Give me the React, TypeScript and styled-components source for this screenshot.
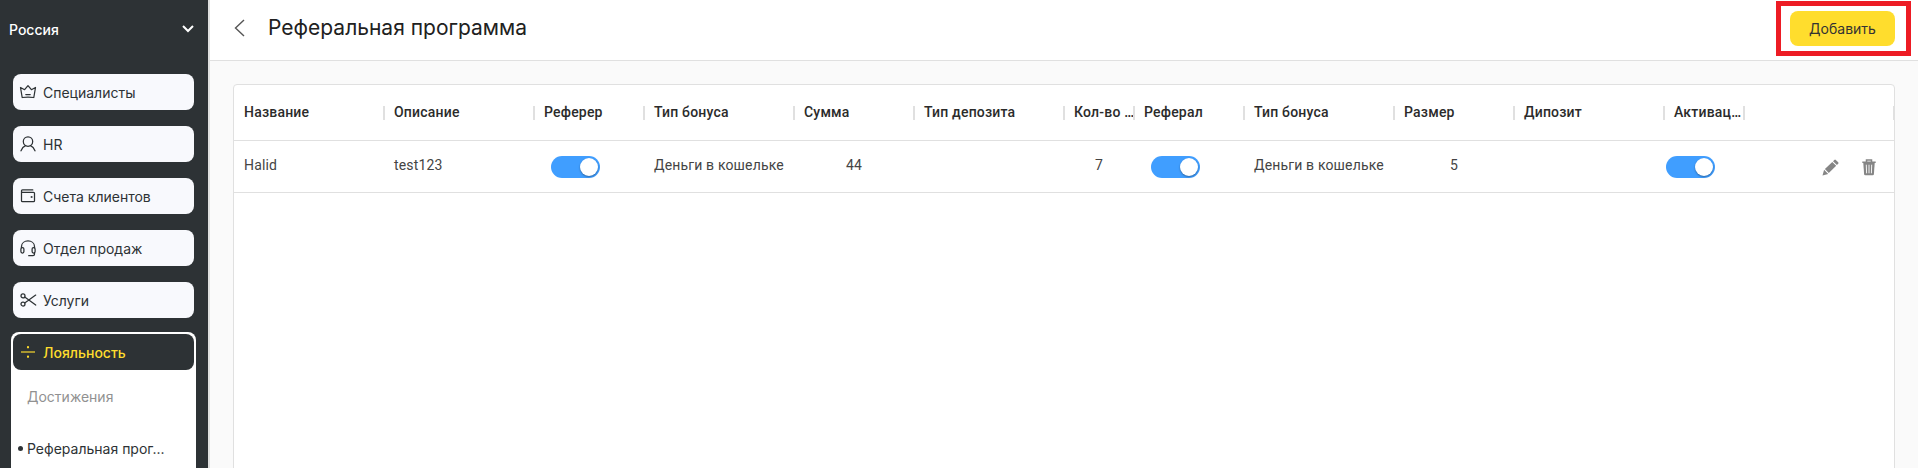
import React from "react";
import styled, { createGlobalStyle } from "styled-components";

const GlobalStyle = createGlobalStyle`
  * { box-sizing: border-box; }
  body { margin: 0; background: #fafafa; overflow: hidden; }
`;

const Page = styled.div`
  display: flex;
  height: 468px;
  overflow: hidden;
  font-family: Inter, "Liberation Sans", sans-serif;
`;

const Sidebar = styled.aside`
  width: 210px;
  flex: none;
  background: #2d3235;
  border-right: 2px solid #e0e0e0;
  padding: 0 12px 0 11px;
  overflow: hidden;
`;

const Region = styled.div`
  display: flex;
  align-items: center;
  justify-content: space-between;
  height: 58px;
  margin: 0 2px 16px -2px;
  font-size: 14px;
  font-weight: 500;
  color: #fff;
`;

const NavItem = styled.div<{ $active?: boolean }>`
  display: flex;
  align-items: center;
  gap: 6px;
  height: 36px;
  margin: 0 2px 16px;
  padding-left: 6px;
  border-radius: 8px;
  font-size: 14px;
  font-weight: ${(p) => (p.$active ? 500 : 400)};
  color: ${(p) => (p.$active ? "#ffdd2d" : "#2d3235")};
  background: ${(p) => (p.$active ? "#2d3235" : "#f8f9fd")};
`;

const NavIcon = styled.svg`
  width: 18px;
  height: 18px;
  flex: none;
  fill: none;
  stroke: currentColor;
  stroke-width: 1.25;
  stroke-linejoin: round;
  stroke-linecap: round;
`;

const NavGroup = styled.div`
  margin-top: -2px;
  padding-top: 2px;
  height: 200px;
  border-radius: 8px 8px 0 0;
  background: #fff;
`;

const SubItem = styled.div<{ $current?: boolean }>`
  display: flex;
  align-items: center;
  gap: 4px;
  height: 52px;
  margin-top: ${(p) => (p.$current ? "0" : "-16px")};
  padding-left: ${(p) => (p.$current ? "7px" : "16px")};
  font-size: 14px;
  color: ${(p) => (p.$current ? "#2d3235" : "#919191")};
`;

const Bullet = styled.span`
  width: 5px;
  height: 5px;
  border-radius: 50%;
  background: currentColor;
`;

const Main = styled.main`
  flex: 1;
  min-width: 0;
`;

const Header = styled.header`
  display: flex;
  align-items: center;
  height: 61px;
  padding: 0 7px 4px 24px;
  border-bottom: 1px solid #e0e0e0;
  background: #fff;
`;

const Title = styled.h1`
  flex: 1;
  margin: 0 0 0 22px;
  font-size: 21px;
  font-weight: 400;
  line-height: 28px;
  color: #212121;
`;

const Highlight = styled.div`
  display: flex;
  padding: 5px 11px 5px 9px;
  width: 135px;
  height: 55px;
  border: 5px solid #ed1c24;
`;

const AddButton = styled.button`
  flex: 1;
  height: 35px;
  padding: 0;
  border: 0;
  border-radius: 8px;
  background: #ffdd2d;
  font: 400 14px Inter, sans-serif;
  color: #333;
`;

const Table = styled.section`
  width: 1662px;
  height: 400px;
  margin: 23px 0 0 23px;
  border: 1px solid #e0e0e0;
  border-radius: 4px;
  background: #fff;
  font-family: Roboto, sans-serif;
  font-size: 14px;
  letter-spacing: 0.15px;
`;

const GridRow = styled.div<{ $height: number }>`
  display: grid;
  grid-template-columns: 150px 150px 110px 150px 120px 150px 70px 110px 150px 120px 150px 80px 150px;
  height: ${(p) => p.$height}px;
  border-bottom: 1px solid #e0e0e0;
`;

const HeadCell = styled.div<{ $last?: boolean }>`
  display: flex;
  align-items: center;
  justify-content: space-between;
  min-width: 0;
  padding-left: 10px;
  margin-right: ${(p) => (p.$last ? "0" : "-1px")};
  font-weight: 500;
  letter-spacing: 0.2px;
  color: #2b2b2b;

  &::after {
    content: "";
    flex: none;
    width: ${(p) => (p.$last ? "1px" : "2px")};
    height: 14px;
    background: #e0e0e0;
  }
`;

const HeadLabel = styled.span`
  min-width: 0;
  padding-bottom: 2px;
  white-space: nowrap;
`;

const Cell = styled.div<{ $center?: boolean }>`
  padding: ${(p) => (p.$center ? "0" : "0 0 0 10px")};
  text-align: ${(p) => (p.$center ? "center" : "left")};
  line-height: 48px;
  white-space: nowrap;
  color: #444;
`;

const ToggleCell = styled.div<{ $inset: number }>`
  padding: 15px 0 0 ${(p) => p.$inset}px;
`;

const Toggle = styled.div`
  display: flex;
  justify-content: flex-end;
  width: 49px;
  height: 22px;
  padding: 2px;
  border-radius: 11px;
  background: #409eff;
`;

const Knob = styled.div`
  width: 18px;
  height: 18px;
  border-radius: 50%;
  background: #fff;
  box-shadow: 0 1px 2px rgba(0, 0, 0, 0.35);
`;

const Actions = styled.div`
  display: flex;
  justify-content: flex-end;
  gap: 23px;
  padding: 18px 18px 0 0;
  color: #858585;
`;

const icons: Record<string, React.ReactNode> = {
  crown: <path d="M1.500 4.500 5.600 6.700 9 2.700l3.400 4 4.100-2.200-1.700 10c-3.800-.6-7.800-.6-11.600 0ZM6.800 11.500h4.400" />,
  user: <><circle cx="9" cy="6.600" r="4.700" /><path d="M2 15.800c1-2.600 2.500-4.300 4.500-5.100M16 15.800c-1-2.600-2.500-4.300-4.500-5.100" /></>,
  wallet: <><path d="M2.500 4.500v9.200c0 .7.400 1 1 1h11c.6 0 1-.3 1-1V6.300c0-.7-.4-1-1-1h-11C2.100 5.300 2.100 2.900 3.500 2.900h10.300" /><circle cx="12.600" cy="10" r=".4" /></>,
  headset: <><path d="M2.500 8.800V7.600c0-7.500 13-7.500 13 0v1.200" /><rect x="1.900" y="8.500" width="3" height="5.500" rx="1.400" /><rect x="13.100" y="8.500" width="3" height="5.500" rx="1.400" /><path d="M15.500 13.500V15c0 1-.6 1.700-1.500 1.700H9.700" /></>,
  scissors: <><circle cx="4" cy="4.900" r="2" /><circle cx="4" cy="13" r="2" /><path d="m5.700 6.100 11 8M5.700 11.900l11-7.800" /></>,
  loyalty: <><path d="M2 9h14" opacity=".65" strokeWidth="1.800" strokeLinecap="butt" /><path d="M9 4.200v.1M9 13.700v.1" strokeWidth="2.200" /></>,
};

const nav = [
  ["crown", "Специалисты"],
  ["user", "HR"],
  ["wallet", "Счета клиентов"],
  ["headset", "Отдел продаж"],
  ["scissors", "Услуги"],
];

const columns = ["Название", "Описание", "Реферер", "Тип бонуса", "Сумма", "Тип депозита", "Кол-во …", "Реферал", "Тип бонуса", "Размер", "Дипозит", "Активац…", ""];

const Switch = ({ inset }: { inset: number }) => (
  <ToggleCell $inset={inset}><Toggle><Knob /></Toggle></ToggleCell>
);

export default function App() {
  return (
    <Page>
      <GlobalStyle />
      <Sidebar>
        <Region>
          Россия
          <svg width="12" height="8" viewBox="0 0 12 8" fill="none" stroke="#fff" strokeWidth="2"><path d="m1 1 5 5 5-5" /></svg>
        </Region>
        {nav.map(([icon, label]) => (
          <NavItem key={icon}><NavIcon viewBox="0 0 18 18">{icons[icon]}</NavIcon>{label}</NavItem>
        ))}
        <NavGroup>
          <NavItem $active><NavIcon viewBox="0 0 18 18">{icons.loyalty}</NavIcon>Лояльность</NavItem>
          <SubItem>Достижения</SubItem>
          <SubItem $current><Bullet />Реферальная прог...</SubItem>
        </NavGroup>
      </Sidebar>
      <Main>
        <Header>
          <svg width="12" height="18" viewBox="0 0 12 18" fill="none" stroke="#555" strokeWidth="1.400"><path d="M10 1 1.500 9l8.500 8" /></svg>
          <Title>Реферальная программа</Title>
          <Highlight><AddButton>Добавить</AddButton></Highlight>
        </Header>
        <Table>
          <GridRow $height={56}>
            {columns.map((name, i) => (
              <HeadCell key={i} $last={i === columns.length - 1}><HeadLabel>{name}</HeadLabel></HeadCell>
            ))}
          </GridRow>
          <GridRow $height={52}>
            <Cell>Halid</Cell>
            <Cell>test123</Cell>
            <Switch inset={17} />
            <Cell>Деньги в кошельке</Cell>
            <Cell $center>44</Cell>
            <Cell />
            <Cell $center>7</Cell>
            <Switch inset={17} />
            <Cell>Деньги в кошельке</Cell>
            <Cell $center>5</Cell>
            <Cell />
            <Switch inset={2} />
            <Actions>
              <svg width="17" height="17" viewBox="0 0 17 17" fill="currentColor"><path d="m.5 16.500 1.600-5.700 4.100 4.100ZM2.900 10l7.400-7.100 3.900 3.900-7.400 7.300ZM11 2.200 12.300.9q.8-.7 1.500 0l2.400 2.400q.7.7 0 1.500l-1.300 1.300Z" /></svg>
              <svg width="14" height="17" viewBox="0 0 14 17" fill="none" stroke="currentColor"><path d="M4.500 2.500V1h5v1.500M.3 3.200h13.400" strokeWidth="1.500" /><path d="m1.300 4 .8 11.200q.1 1.100 1.200 1.100h7.400q1.100 0 1.200-1.100L12.700 4Z" fill="currentColor" stroke="none" /><path d="m4.300 5.700.3 8.600M7 5.700v8.600M9.700 5.700l-.3 8.600" stroke="#fff" strokeWidth=".9" /></svg>
            </Actions>
          </GridRow>
        </Table>
      </Main>
    </Page>
  );
}
